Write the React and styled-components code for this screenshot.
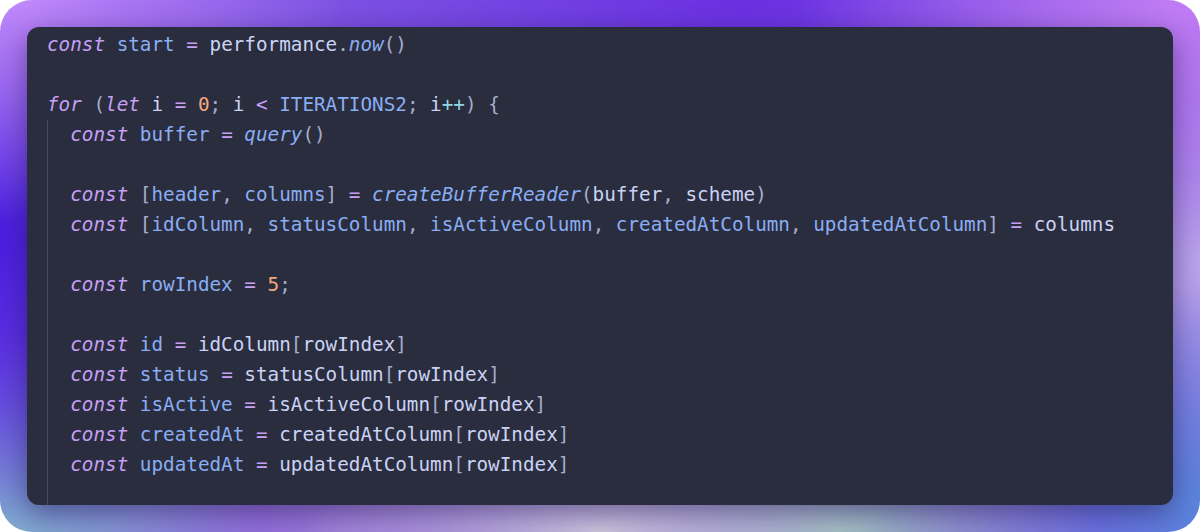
import React from "react"
import styled, { createGlobalStyle } from "styled-components"

const colors = {
  card: "#2a2d3e",
  text: "#cad3f5",
  keyword: "#c6a0f6",
  variable: "#8aadf4",
  number: "#f5a97f",
  op: "#c6a0f6",
  inc: "#91d7e3",
  punct: "#a5adcb",
  guide: "#454a5f",
}

// each line is a list of [kind, text]
const head = [
  [["kw", "const"], ["t", " "], ["v", "start"], ["t", " "], ["op", "="], ["t", " performance"], ["p", "."], ["fn", "now"], ["p", "()"]],
  [],
  [
    ["kw", "for"], ["t", " "], ["p", "("], ["kw", "let"], ["t", " i "], ["op", "="], ["t", " "], ["n", "0"], ["p", ";"],
    ["t", " i "], ["op", "<"], ["t", " "], ["v", "ITERATIONS2"], ["p", ";"], ["t", " i"], ["inc", "++"], ["p", ")"], ["t", " "], ["p", "{"],
  ],
]

const access = (name, column) => [
  ["kw", "const"], ["t", " "], ["v", name], ["t", " "], ["op", "="], ["t", " " + column], ["p", "["], ["t", "rowIndex"], ["p", "]"],
]

const body = [
  [["kw", "const"], ["t", " "], ["v", "buffer"], ["t", " "], ["op", "="], ["t", " "], ["fn", "query"], ["p", "()"]],
  [],
  [
    ["kw", "const"], ["t", " "], ["p", "["], ["v", "header"], ["p", ","], ["t", " "], ["v", "columns"], ["p", "]"], ["t", " "], ["op", "="], ["t", " "],
    ["fn", "createBufferReader"], ["p", "("], ["t", "buffer"], ["p", ","], ["t", " scheme"], ["p", ")"],
  ],
  [
    ["kw", "const"], ["t", " "], ["p", "["], ["v", "idColumn"], ["p", ","], ["t", " "], ["v", "statusColumn"], ["p", ","], ["t", " "],
    ["v", "isActiveColumn"], ["p", ","], ["t", " "], ["v", "createdAtColumn"], ["p", ","], ["t", " "], ["v", "updatedAtColumn"],
    ["p", "]"], ["t", " "], ["op", "="], ["t", " columns"],
  ],
  [],
  [["kw", "const"], ["t", " "], ["v", "rowIndex"], ["t", " "], ["op", "="], ["t", " "], ["n", "5"], ["p", ";"]],
  [],
  access("id", "idColumn"),
  access("status", "statusColumn"),
  access("isActive", "isActiveColumn"),
  access("createdAt", "createdAtColumn"),
  access("updatedAt", "updatedAtColumn"),
  [],
  [],
]

const CodeLine = ({ tokens }) => (
  <Line>
    {tokens.length === 0 ? " " : tokens.map(([kind, text], i) => (
      <Tok key={i} $kind={kind}>{text}</Tok>
    ))}
  </Line>
)

const App = () => {
  return (
    <>
      <GlobalStyle />
      <Frame>
        <Card>
          {head.map((tokens, i) => <CodeLine key={i} tokens={tokens} />)}
          <Block>
            {body.map((tokens, i) => <CodeLine key={i} tokens={tokens} />)}
          </Block>
        </Card>
      </Frame>
    </>
  )
}

export default App

const GlobalStyle = createGlobalStyle`
  html, body {
    margin: 0;
    padding: 0;
    background: #ffffff;
  }
`

const Frame = styled.div`
  width: 1200px;
  height: 532px;
  box-sizing: border-box;
  padding: 27px;
  display: flex;
  border-radius: 32px;
  overflow: hidden;
  background-color: #7d52e2;
  background-image:
    radial-gradient(ellipse 320px 220px at 2% 0%, #c088fa 0%, transparent 100%),
    radial-gradient(ellipse 380px 240px at 98% 2%, #c07cf4 0%, transparent 100%),
    radial-gradient(ellipse 420px 200px at 62% 0%, #6a30e2 0%, transparent 100%),
    radial-gradient(ellipse 260px 320px at 0% 45%, #4a1ee0 0%, transparent 100%),
    radial-gradient(ellipse 260px 200px at 0% 100%, #86c0cc 0%, transparent 100%),
    radial-gradient(ellipse 300px 120px at 50% 100%, #cbc4dc 0%, transparent 100%),
    radial-gradient(ellipse 260px 120px at 70% 100%, #9cc0be 0%, transparent 100%),
    radial-gradient(ellipse 240px 220px at 100% 95%, #5a86dc 0%, transparent 100%),
    radial-gradient(ellipse 200px 260px at 100% 50%, #bca6ec 0%, transparent 100%),
    radial-gradient(ellipse 300px 200px at 28% 100%, #9a78d8 0%, transparent 100%);
`

const Card = styled.div`
  flex: 1;
  overflow: hidden;
  box-sizing: border-box;
  padding: 3px 20px 0;
  background: ${colors.card};
  border-radius: 12px;
  box-shadow: 0 8px 28px rgba(20, 10, 60, 0.45);
  font-family: "DejaVu Sans Mono", "Liberation Mono", monospace;
  font-size: 19.3px;
  line-height: 30px;
  color: ${colors.text};
`

const Block = styled.div`
  border-left: 1px solid ${colors.guide};
  padding-left: calc(2ch - 1px);
`

const Line = styled.div`
  height: 30px;
  white-space: pre;
`

const tokColor = {
  kw: colors.keyword,
  v: colors.variable,
  fn: colors.variable,
  n: colors.number,
  op: colors.op,
  inc: colors.inc,
  p: colors.punct,
  t: colors.text,
}

const Tok = styled.span`
  color: ${props => tokColor[props.$kind]};
  font-style: ${props => (props.$kind === "kw" || props.$kind === "fn" ? "italic" : "normal")};
`
